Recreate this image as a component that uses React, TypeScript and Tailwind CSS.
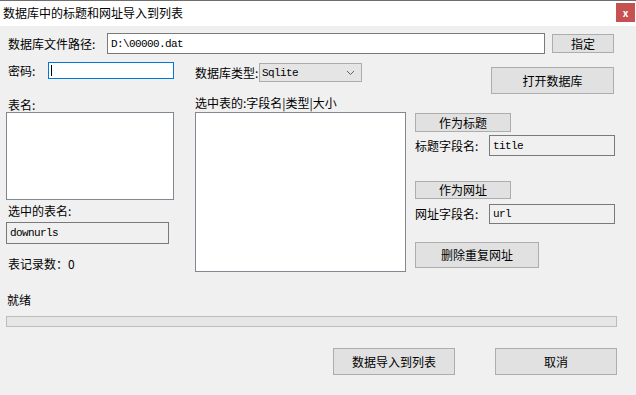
const ui = { fontFamily: '"Noto Sans CJK SC", "Liberation Sans", sans-serif' }
const mono = { fontFamily: '"Liberation Mono", "DejaVu Sans Mono", monospace' }

function Btn({ label, className }: { label: string; className: string }) {
  return (
    <div
      className={`flex items-center justify-center border border-[#adadad] bg-[#e1e1e1] text-[12px] text-black ${className}`}
    >
      {label}
    </div>
  )
}

function Field({ value, className }: { value: string; className: string }) {
  return (
    <div
      className={`flex items-center border border-[#7a7a7a] pl-[3px] text-[11px] tracking-[-0.6px] text-black ${className}`}
      style={mono}
    >
      {value}
    </div>
  )
}

export default function App() {
  return (
    <div
      className="flex h-[395px] w-[636px] flex-col overflow-hidden bg-[#f0f0f0] text-[12px] leading-[14px] text-black"
      style={ui}
    >
      {/* title bar */}
      <div className="flex h-[26px] shrink-0 items-start justify-between border-t border-[#6e6e6e] bg-white">
        <div className="ml-[3px] mt-[5px] text-[12px]">数据库中的标题和网址导入到列表</div>
        <div className="mr-[1px] mt-[2px] flex h-[19px] w-[19px] items-center justify-center bg-[#c75050] text-[10px] font-bold text-white">
          x
        </div>
      </div>

      {/* file path */}
      <div className="mt-[7px] flex h-[21px] items-center">
        <div className="ml-[8px] w-[99px]">数据库文件路径:</div>
        <Field value="D:\00000.dat" className="h-[21px] w-[438px] bg-white" />
        <Btn label="指定" className="ml-[7px] h-[19px] w-[62px]" />
      </div>

      {/* password / type / open */}
      <div className="mt-[8px] flex h-[31px] items-start">
        <div className="ml-[8px] flex h-[17px] w-[40px] items-center">密码:</div>
        <div className="flex h-[17px] w-[126px] items-center border border-[#0078d7] bg-white pl-[2px]">
          <div className="h-[11px] w-px bg-black" />
        </div>
        <div className="ml-[21px] mt-[1px] flex h-[19px] w-[64px] items-center">数据库类型:</div>
        <div className="mt-[1px] flex h-[19px] w-[103px] items-center justify-between border border-[#acacac] bg-[#e5e5e5] pl-[2px] pr-[6px]">
          <span className="text-[11px] tracking-[-0.6px]" style={mono}>
            Sqlite
          </span>
          <svg width="9" height="6" viewBox="0 0 9 6">
            <path d="M1 1 L4.5 4.5 L8 1" fill="none" stroke="#606060" strokeWidth="1" />
          </svg>
        </div>
        <Btn label="打开数据库" className="ml-auto mr-[22px] mt-[5px] h-[27px] w-[123px]" />
      </div>

      {/* three columns */}
      <div className="mt-[2px] flex">
        <div className="ml-[6px] flex w-[168px] flex-col">
          <div className="ml-[2px] mt-[3px] h-[14px]">表名:</div>
          <div className="h-[88px] border border-[#828790] bg-white" />
          <div className="ml-[2px] mt-[4px] h-[14px]">选中的表名:</div>
          <Field value="downurls" className="mt-[4px] h-[22px] w-[163px]" />
          <div className="ml-[2px] mt-[13px] h-[14px]">表记录数：0</div>
        </div>

        <div className="ml-[21px] flex w-[211px] flex-col">
          <div className="mt-[1px] h-[14px]">选中表的:字段名|类型|大小</div>
          <div className="mt-[2px] h-[160px] border border-[#828790] bg-white" />
        </div>

        <div className="ml-[9px] flex w-[200px] flex-col">
          <Btn label="作为标题" className="mt-[18px] h-[19px] w-[96px]" />
          <div className="mt-[3px] flex h-[21px] items-center">
            <div className="w-[74px]">标题字段名:</div>
            <Field value="title" className="h-[21px] w-[126px]" />
          </div>
          <Btn label="作为网址" className="mt-[25px] h-[18px] w-[96px]" />
          <div className="mt-[5px] flex h-[20px] items-center">
            <div className="w-[74px]">网址字段名:</div>
            <Field value="url" className="h-[20px] w-[126px]" />
          </div>
          <Btn label="删除重复网址" className="mt-[18px] h-[26px] w-[124px]" />
        </div>
      </div>

      {/* status */}
      <div className="ml-[7px] mt-[21px] h-[14px]">就绪</div>
      <div className="ml-[6px] mt-[9px] h-[11px] w-[611px] border border-[#bcbcbc] bg-[#e6e6e6]" />

      <div className="mt-[21px] flex">
        <Btn label="数据导入到列表" className="ml-[333px] h-[27px] w-[122px]" />
        <Btn label="取消" className="ml-[40px] h-[27px] w-[122px]" />
      </div>
    </div>
  )
}
